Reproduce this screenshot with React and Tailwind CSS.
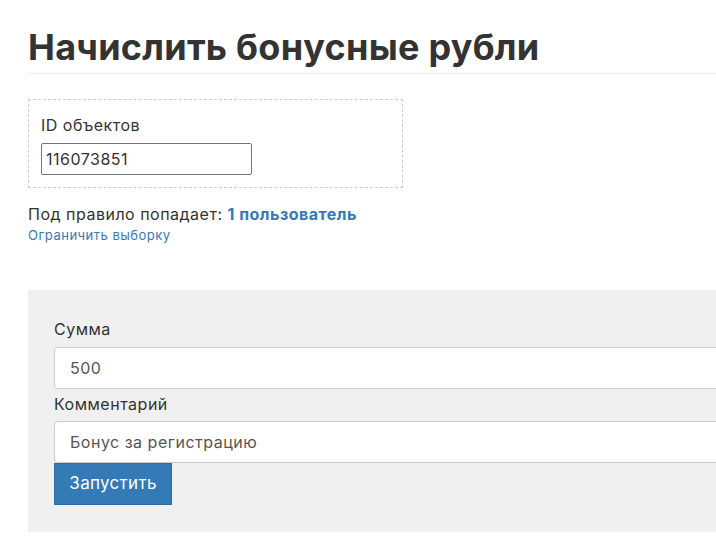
export default function App() {
  return (
    <div className="min-h-[560px] bg-white text-[#333] overflow-hidden tracking-[0.5px]" style={{ fontFamily: "Inter, 'Noto Sans', sans-serif" }}>
      <div className="pl-[28px]">
        <h1 className="pt-[24px] pb-[3px] text-[36px] font-bold leading-[46px] tracking-[0.25px] text-[#333] border-b border-[#eee]">
          Начислить бонусные рубли
        </h1>
        <div className="mt-[25px] w-[375px] h-[89px] border border-dashed border-[#ccc] pl-[12px] pt-[14px]">
          <div className="text-[16px] leading-[22px]">ID объектов</div>
          <input
            readOnly
            value="116073851"
            className="mt-[7px] w-[211px] h-[32px] border border-[#767676] rounded-[2px] px-[4px] text-[16px] tracking-[0.5px] text-[#333] outline-none"
          />
        </div>
        <div className="mt-[15px] text-[16px] leading-[22px]">
          Под правило попадает: <a className="font-bold text-[#337ab7]">1 пользователь</a>
        </div>
        <div className="mt-[1px] text-[13px] leading-[18px] text-[#337ab7]">Ограничить выборку</div>
        <div className="mt-[46px] bg-[#f0f0f0] h-[242px] pl-[26px] pt-[28px] overflow-hidden">
          <div className="text-[16px] leading-[22px] text-[#333]">Сумма</div>
          <input
            readOnly
            value="500"
            className="mt-[7px] block w-[720px] h-[42px] bg-white border border-[#ccc] rounded-[4px] px-[15px] text-[16px] tracking-[0.5px] text-[#555] outline-none"
          />
          <div className="mt-[4px] text-[16px] leading-[22px] text-[#333]">Комментарий</div>
          <input
            readOnly
            value="Бонус за регистрацию"
            className="mt-[6px] block w-[720px] h-[42px] bg-white border border-[#ccc] rounded-[4px] px-[15px] text-[16px] tracking-[0.5px] text-[#555] outline-none"
          />
          <button className="block w-[118px] h-[42px] bg-[#337ab7] border border-[#2e6da4] text-white text-[17px] tracking-[0.3px]">
            Запустить
          </button>
        </div>
      </div>
    </div>
  );
}
